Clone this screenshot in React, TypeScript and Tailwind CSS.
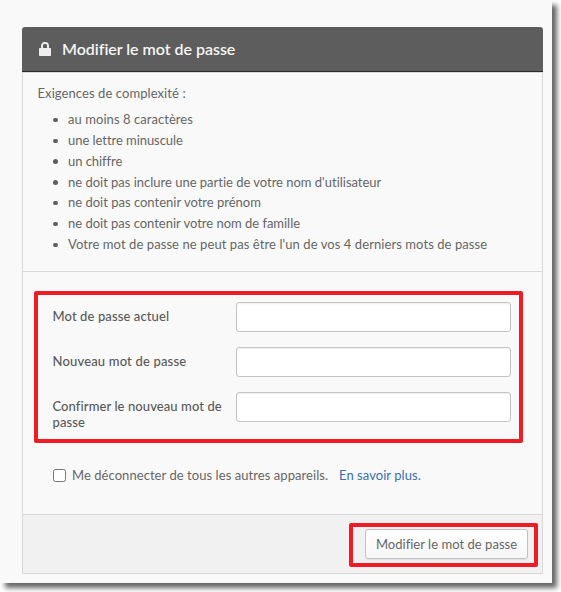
const requirements = [
  { text: 'au moins 8 caractères', spacing: 'tracking-[0.06px]' },
  { text: 'une lettre minuscule', spacing: 'tracking-[-0.05px]' },
  { text: 'un chiffre', spacing: 'tracking-[-0.05px]' },
  { text: "ne doit pas inclure une partie de votre nom d'utilisateur", spacing: 'tracking-[-0.015px]' },
  { text: 'ne doit pas contenir votre prénom', spacing: 'tracking-[0px]' },
  { text: 'ne doit pas contenir votre nom de famille', spacing: 'tracking-[-0.02px]' },
  { text: "Votre mot de passe ne peut pas être l'un de vos 4 derniers mots de passe", spacing: 'tracking-[0.075px]' },
];

const fields = [
  { id: 'current', label: 'Mot de passe actuel', spacing: 'tracking-[0.11px]' },
  { id: 'new', label: 'Nouveau mot de passe', spacing: 'tracking-[0.17px]' },
  { id: 'confirm', label: 'Confirmer le nouveau mot de passe', spacing: 'tracking-[0.09px]' },
];

function LockIcon() {
  return (
    <svg className="mr-[11px] block h-[14px] w-[12px]" viewBox="0 0 12 14" fill="none">
      <rect x="0" y="6" width="12" height="8" rx="0.8" fill="#eeeeee" />
      <path d="M3 6.5V3.9a3 3 0 0 1 6 0v2.6" stroke="#eeeeee" strokeWidth="1.9" />
    </svg>
  );
}

export default function App() {
  return (
    <div className="h-[592px] w-[561px] overflow-hidden bg-white font-['Lato',sans-serif] text-[13px] text-[#666666]">
      <div className="h-[583px] w-[552px] bg-[#f9f9f9] px-[22px] pt-[27px] pr-[9px] shadow-[5px_5px_5px_rgba(0,0,0,0.6)]">
        <header className="flex h-[45px] items-center rounded-t-[3px] border-b border-[#2b2b2b] bg-[#5d5d5d] pl-[17px] text-[#f5f5f5]">
          <LockIcon />
          <h1 className="text-[16px] leading-[20px] font-semibold tracking-[-0.03px] whitespace-nowrap">Modifier le mot de passe</h1>
        </header>
        <main className="h-[502px] border border-[#d8d8d8]">
          <section className="h-[199px] border-b border-[#d8d8d8] pt-[10px] pl-[14.5px]">
            <p className="h-[26.6px] leading-[20px] tracking-[0.08px]">Exigences de complexité :</p>
            <ul>
              {requirements.map((item) => (
                <li key={item.text} className="flex h-[20.8px] items-center leading-[21.6px] whitespace-nowrap">
                  <span className="mr-[10.5px] ml-[15.5px] size-[4.5px] rounded-full bg-[#5e5e5e]" />
                  <span className={item.spacing}>{item.text}</span>
                </li>
              ))}
            </ul>
          </section>
          <form className="flex h-[242px] flex-col" onSubmit={(e) => e.preventDefault()}>
            <div className="mt-[19px] ml-[11px] h-[152px] w-[489px] rounded-[2px] border-4 border-[#ee1c25] pt-[7px] pl-[14.5px]">
              {fields.map((field) => (
                <div key={field.id} className="flex h-[45px] items-start">
                  <label htmlFor={field.id} className="w-[183.5px] pt-[6px] pr-[8px] leading-[16px] font-medium text-[#5a5a5a]">
                    <span className={field.spacing}>{field.label}</span>
                  </label>
                  <input
                    id={field.id}
                    type="password"
                    className="h-[30px] w-[275px] rounded-[3px] border border-[#c4c4c4] bg-white shadow-[inset_0_1px_2px_rgba(0,0,0,0.06)]"
                  />
                </div>
              ))}
            </div>
            <div className="mt-[23px] ml-[30px] flex h-[20px] items-center whitespace-nowrap">
              <input type="checkbox" className="mr-[6px] mb-[2px] size-[13px] appearance-none rounded-[2.5px] border border-[#767676] bg-white" />
              <span className="w-[267px] tracking-[0.06px]">Me déconnecter de tous les autres appareils.</span>
              <a href="#aide" className="tracking-[0.06px] text-[#3a6fb0]">
                En savoir plus.
              </a>
            </div>
          </form>
          <footer className="flex h-[59px] justify-end border-t border-[#d8d8d8] bg-[#f1f1f1] pt-[8px] pr-[4px]">
            <div className="h-[44px] w-[189px] rounded-[2px] border-4 border-[#ee1c25] pt-[2px] pl-[12px]">
              <button className="h-[30px] w-[163px] rounded-[3px] border border-[#c1c1c1] bg-gradient-to-b from-white to-[#f7f7f7] pt-[2px] tracking-[0.03px] whitespace-nowrap shadow-[0_1px_0_rgba(0,0,0,0.06)]">
                Modifier le mot de passe
              </button>
            </div>
          </footer>
        </main>
      </div>
    </div>
  );
}
